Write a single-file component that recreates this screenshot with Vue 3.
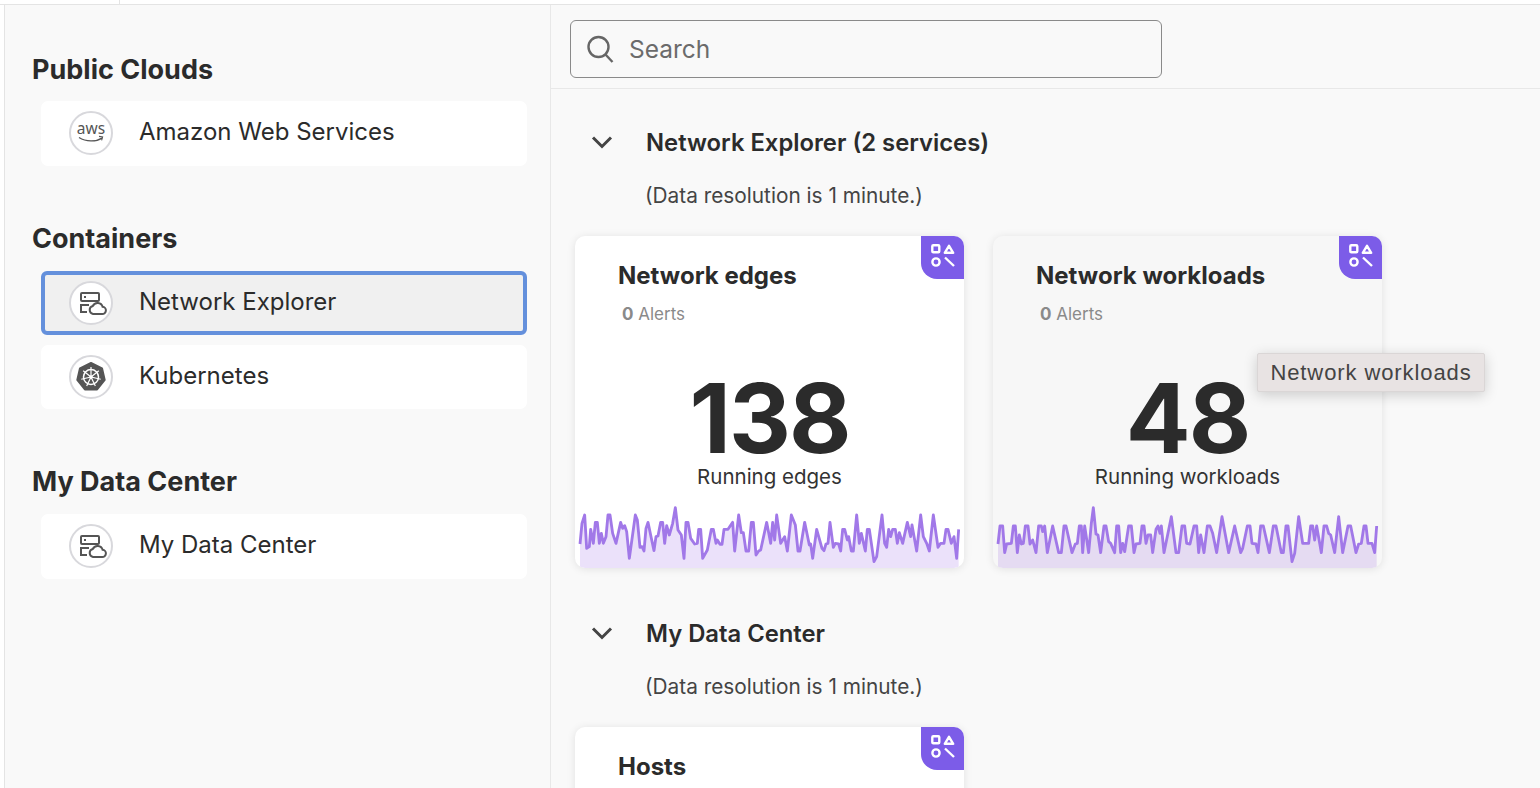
<script setup>
const edgeData = "30,162 36,100 44,75 50,175 58,170 62,118 70,160 76,97 82,97 88,160 94,130 100,160 108,140 114,75 120,75 128,130 138,160 152,97 158,115 164,107 170,125 178,205 196,75 202,90 210,172 216,170 222,183 228,115 234,97 244,145 252,182 258,140 264,138 272,97 278,97 284,160 290,107 298,135 308,100 316,53 324,120 334,135 342,205 348,97 354,97 362,145 374,162 382,160 386,118 392,118 398,205 412,180 424,118 430,118 438,160 442,150 450,163 456,163 462,118 474,118 488,97 494,183 506,75 514,128 520,128 528,183 536,183 544,97 550,97 558,195 566,183 572,180 590,97 602,160 608,97 614,150 620,75 632,160 644,140 652,183 664,75 676,105 684,183 690,183 704,97 718,165 722,162 728,205 740,118 756,175 762,182 768,162 774,160 780,97 790,172 796,160 806,162 812,183 818,118 824,118 832,150 836,140 844,183 850,183 860,75 868,160 874,130 886,183 892,118 898,118 912,215 920,200 936,75 944,160 950,172 956,118 962,140 968,118 976,118 982,160 988,128 998,160 1012,97 1022,140 1026,105 1040,183 1052,75 1060,140 1070,160 1078,183 1090,75 1104,172 1112,160 1122,160 1128,118 1134,118 1144,160 1152,140 1160,205 1166,118";
const workloadData = "24,162 30,108 38,108 44,188 50,162 64,160 70,108 76,108 82,188 88,135 94,162 100,160 106,108 114,108 120,162 128,150 138,188 146,108 154,108 158,125 164,108 172,188 188,108 206,188 214,188 222,108 228,108 246,188 256,162 262,160 268,108 274,108 278,188 284,108 296,188 304,100 310,53 318,132 324,135 332,188 342,108 348,108 356,155 362,160 374,188 380,108 386,108 392,188 398,160 404,185 416,108 424,108 432,188 438,162 450,160 456,108 462,108 468,160 474,135 482,135 488,188 498,118 504,108 510,130 514,108 522,188 544,80 558,188 566,188 576,108 584,108 590,160 600,162 606,135 612,108 620,108 626,188 632,135 642,188 652,108 660,108 668,130 680,188 696,80 716,188 734,108 752,188 758,175 772,108 780,108 786,160 798,162 804,188 812,108 820,108 838,188 850,108 858,108 874,188 880,188 888,108 894,108 906,215 914,190 926,80 938,160 956,160 962,108 968,108 974,150 980,108 994,188 1002,108 1010,108 1016,130 1022,135 1034,188 1046,80 1058,188 1074,108 1082,108 1098,188 1106,162 1114,160 1122,108 1128,108 1134,160 1146,160 1154,188 1160,108";

function area(points) {
  const list = points.split(" ");
  const first = list[0].split(",")[0];
  const last = list[list.length - 1].split(",")[0];
  return `${first},234 ${points} ${last},234`;
}

const groups = [
  { title: "Public Clouds", items: [{ name: "Amazon Web Services", icon: "aws" }] },
  {
    title: "Containers",
    items: [
      { name: "Network Explorer", icon: "server", active: true },
      { name: "Kubernetes", icon: "k8s" },
    ],
  },
  { title: "My Data Center", items: [{ name: "My Data Center", icon: "server" }] },
];

const cards = [
  { title: "Network edges", value: "138", label: "Running edges", data: edgeData, box: "15 48 1167 186" },
  { title: "Network workloads", value: "48", label: "Running workloads", data: workloadData, box: "9 48 1167 186", hover: true },
];

// spokes of the kubernetes wheel
const spokes = [0, 1, 2, 3, 4, 5, 6].map((i) => {
  const a = (i * 2 * Math.PI) / 7 - Math.PI / 2;
  return { x: 22 + Math.cos(a) * 10, y: 22 + Math.sin(a) * 10 };
});
</script>

<template>
  <div class="page">
    <div class="topstrip"><div class="tab"></div></div>
    <div class="body">
      <aside class="sidebar">
        <section v-for="group in groups" :key="group.title" class="group">
          <h2>{{ group.title }}</h2>
          <div class="items">
            <div v-for="item in group.items" :key="item.name" class="item" :class="{ active: item.active }">
              <span class="round">
                <svg v-if="item.icon === 'aws'" width="44" height="44" viewBox="0 0 44 44">
                  <text x="22" y="23" text-anchor="middle" class="awstext">aws</text>
                  <path d="M10 26.500c7 4.500 17 4.500 23 .6" fill="none" stroke="#555" stroke-width="1.300" />
                  <path d="M30 25.400l3.600.6-1 3.400" fill="none" stroke="#555" stroke-width="1.100" />
                </svg>
                <svg v-else-if="item.icon === 'server'" width="44" height="44" viewBox="0 0 44 44" fill="none" stroke="#555" stroke-width="2">
                  <rect x="12" y="12" width="18" height="8" rx="1" />
                  <path d="M15 16h2" />
                  <path d="M20 24h-8v7h6" />
                  <path d="M24 33h9a3.600 3.600 0 0 0 .6-7.200 5.200 5.200 0 0 0-9.800-.8 4.100 4.100 0 0 0 .2 8z" />
                </svg>
                <svg v-else width="44" height="44" viewBox="0 0 44 44">
                  <polygon points="22,8 33,13.300 35.700,25 28.100,34.500 15.900,34.500 8.300,25 11,13.300" fill="#555" stroke="#555" stroke-width="2" stroke-linejoin="round" />
                  <circle cx="22" cy="22" r="7.500" fill="none" stroke="#fff" stroke-width="1.500" />
                  <circle cx="22" cy="22" r="1.800" fill="#fff" />
                  <line v-for="(s, i) in spokes" :key="i" x1="22" y1="22" :x2="s.x" :y2="s.y" stroke="#fff" stroke-width="1.200" />
                </svg>
              </span>
              <span class="item-name">{{ item.name }}</span>
            </div>
          </div>
        </section>
      </aside>

      <main class="main">
        <div class="searchbar">
          <div class="search">
            <svg width="30" height="30" viewBox="0 0 30 30" fill="none" stroke="#666" stroke-width="2.400">
              <circle cx="13.500" cy="13" r="10" />
              <path d="M20.500 20.500l7 7.500" />
            </svg>
            <span>Search</span>
          </div>
        </div>

        <div class="content">
          <section class="service">
            <div class="service-head">
              <svg class="chev" width="22" height="14" viewBox="0 0 22 14" fill="none" stroke="#444" stroke-width="3">
                <path d="M2 2.500l9 9 9-9" />
              </svg>
              <h3>Network Explorer (2 services)</h3>
            </div>
            <p class="resolution">(Data resolution is 1 minute.)</p>
            <div class="cards">
              <article v-for="card in cards" :key="card.title" class="card" :class="{ hover: card.hover }">
                <span class="badge">
                  <svg width="24" height="23" viewBox="0 0 24 23" fill="none" stroke="#fff" stroke-width="2.400">
                    <rect x="1.300" y="1.300" width="7" height="7" rx="1" />
                    <path d="M18 1.800l4.200 7h-8.400z" stroke-linejoin="round" />
                    <circle cx="5" cy="18" r="3.600" />
                    <path d="M14 13.500l9 8.500" />
                  </svg>
                </span>
                <h4>{{ card.title }}</h4>
                <div class="alerts"><b>0</b> Alerts</div>
                <div class="value">{{ card.value }}</div>
                <div class="label">{{ card.label }}</div>
                <svg class="spark" width="389" height="62" :viewBox="card.box">
                  <polygon :points="area(card.data)" class="spark-fill" />
                  <polyline :points="card.data" fill="none" stroke="#a178e8" stroke-width="8.500" stroke-linejoin="round" />
                </svg>
              </article>
              <div class="tooltip">Network workloads</div>
            </div>
          </section>

          <section class="service">
            <div class="service-head">
              <svg class="chev" width="22" height="14" viewBox="0 0 22 14" fill="none" stroke="#444" stroke-width="3">
                <path d="M2 2.500l9 9 9-9" />
              </svg>
              <h3>My Data Center</h3>
            </div>
            <p class="resolution">(Data resolution is 1 minute.)</p>
            <div class="cards">
              <article class="card">
                <span class="badge">
                  <svg width="24" height="23" viewBox="0 0 24 23" fill="none" stroke="#fff" stroke-width="2.400">
                    <rect x="1.300" y="1.300" width="7" height="7" rx="1" />
                    <path d="M18 1.800l4.200 7h-8.400z" stroke-linejoin="round" />
                    <circle cx="5" cy="18" r="3.600" />
                    <path d="M14 13.500l9 8.500" />
                  </svg>
                </span>
                <h4>Hosts</h4>
              </article>
            </div>
          </section>
        </div>
      </main>
    </div>
  </div>
</template>

<style scoped>
.page {
  height: 788px;
  overflow: hidden;
  background: #fff;
  font-family: Inter, "Liberation Sans", sans-serif;
  color: #2b2b2b;
  display: flex;
  flex-direction: column;
}
.topstrip {
  height: 4px;
  border-bottom: 1px solid #e4e4e4;
  flex: none;
}
.tab {
  width: 119px;
  height: 4px;
  border-right: 1px solid #e4e4e4;
}
.body {
  flex: 1;
  min-height: 0;
  display: flex;
  margin-left: 4px;
  border-left: 1px solid #e4e4e4;
  background: #f9f9f9;
}
.sidebar {
  width: 546px;
  flex: none;
  box-sizing: border-box;
  padding-top: 49px;
  border-right: 1px solid #e8e8e8;
}
.group {
  margin-bottom: 57px;
}
.group h2 {
  margin: 0 0 16px 27px;
  font-size: 27px;
  line-height: 32px;
  font-weight: 700;
}
.group:first-child h2 {
  margin-bottom: 15px;
}
.items {
  margin-left: 36px;
  width: 486px;
  display: flex;
  flex-direction: column;
  gap: 9.500px;
}
.item {
  height: 64.500px;
  box-sizing: border-box;
  display: flex;
  align-items: center;
  padding-left: 28px;
  background: #fff;
  border-radius: 7px;
}
.item.active {
  background: #f0f0f0;
  border: 4px solid #6490dc;
  border-radius: 6px;
  padding-left: 24px;
}
.round {
  width: 44px;
  height: 44px;
  box-sizing: border-box;
  flex: none;
  border-radius: 50%;
  background: #fff;
  border: 2px solid #d8d8dc;
  display: flex;
  align-items: center;
  justify-content: center;
}
.round svg {
  flex: none;
}
.awstext {
  font-family: "Noto Sans", sans-serif;
  font-size: 15.500px;
  fill: #555;
}
.item-name {
  margin: 0 0 3px 26px;
  font-size: 24px;
}
.main {
  flex: 1;
  min-width: 0;
}
.searchbar {
  height: 84px;
  box-sizing: border-box;
  border-bottom: 1px solid #e8e8e8;
  padding: 15px 0 0 19px;
}
.search {
  width: 592px;
  height: 58px;
  box-sizing: border-box;
  border: 1px solid #8a8a8a;
  border-radius: 6px;
  display: flex;
  align-items: center;
  padding-left: 14px;
  gap: 14px;
  font-size: 24.500px;
  color: #6b6b6b;
}
.content {
  padding: 37px 0 0 24px;
}
.service {
  margin-bottom: 49px;
}
.service-head {
  display: flex;
  align-items: center;
  height: 32px;
}
.chev {
  margin-left: 16px;
  flex: none;
}
.service-head h3 {
  margin: 0 0 0 33px;
  padding-top: 2px;
  font-size: 23.800px;
  line-height: 32px;
  font-weight: 600;
}
.resolution {
  margin: 24px 0 0 70px;
  font-size: 20.800px;
  line-height: 28px;
  color: #444;
}
.cards {
  position: relative;
  margin-top: 26px;
  display: flex;
  gap: 29px;
}
.card {
  position: relative;
  width: 389px;
  height: 332px;
  box-sizing: border-box;
  background: #fff;
  border-radius: 10px;
  box-shadow: 0 1px 8px rgba(0, 0, 0, 0.1);
  display: flex;
  flex-direction: column;
  overflow: hidden;
}
.card.hover {
  background: #f7f7f7;
}
.badge {
  position: absolute;
  top: 0;
  right: 0;
  width: 43px;
  height: 43px;
  box-sizing: border-box;
  padding: 8px 0 0 10px;
  background: #7c5ce8;
  border-bottom-left-radius: 16px;
}
.badge svg {
  display: block;
}
.card h4 {
  margin: 24px 0 0 43px;
  font-size: 24px;
  line-height: 32px;
  font-weight: 700;
}
.alerts {
  margin: 10px 0 0 47px;
  font-size: 17px;
  line-height: 24px;
  color: #8a8a8a;
}
.value {
  margin-top: 47px;
  text-align: center;
  font-size: 96px;
  line-height: 90px;
  font-weight: 700;
  letter-spacing: -2px;
}
.label {
  margin-top: 1px;
  text-align: center;
  font-size: 20.500px;
  line-height: 26px;
  color: #333;
}
.spark {
  margin-top: auto;
  flex: none;
  display: block;
}
.spark-fill {
  fill: #ebe1fa;
}
.card.hover .spark-fill {
  fill: #e5dbf2;
}
.tooltip {
  position: absolute;
  left: 682px;
  top: 117px;
  height: 39px;
  width: 228px;
  box-sizing: border-box;
  text-align: center;
  line-height: 37px;
  font-family: "Liberation Sans", sans-serif;
  font-size: 22px;
  letter-spacing: 0.9px;
  color: #444;
  background: #e8e3e3;
  border: 1px solid #dad6d6;
  border-radius: 2px;
  box-shadow: 0 3px 14px rgba(0, 0, 0, 0.18);
}
</style>
